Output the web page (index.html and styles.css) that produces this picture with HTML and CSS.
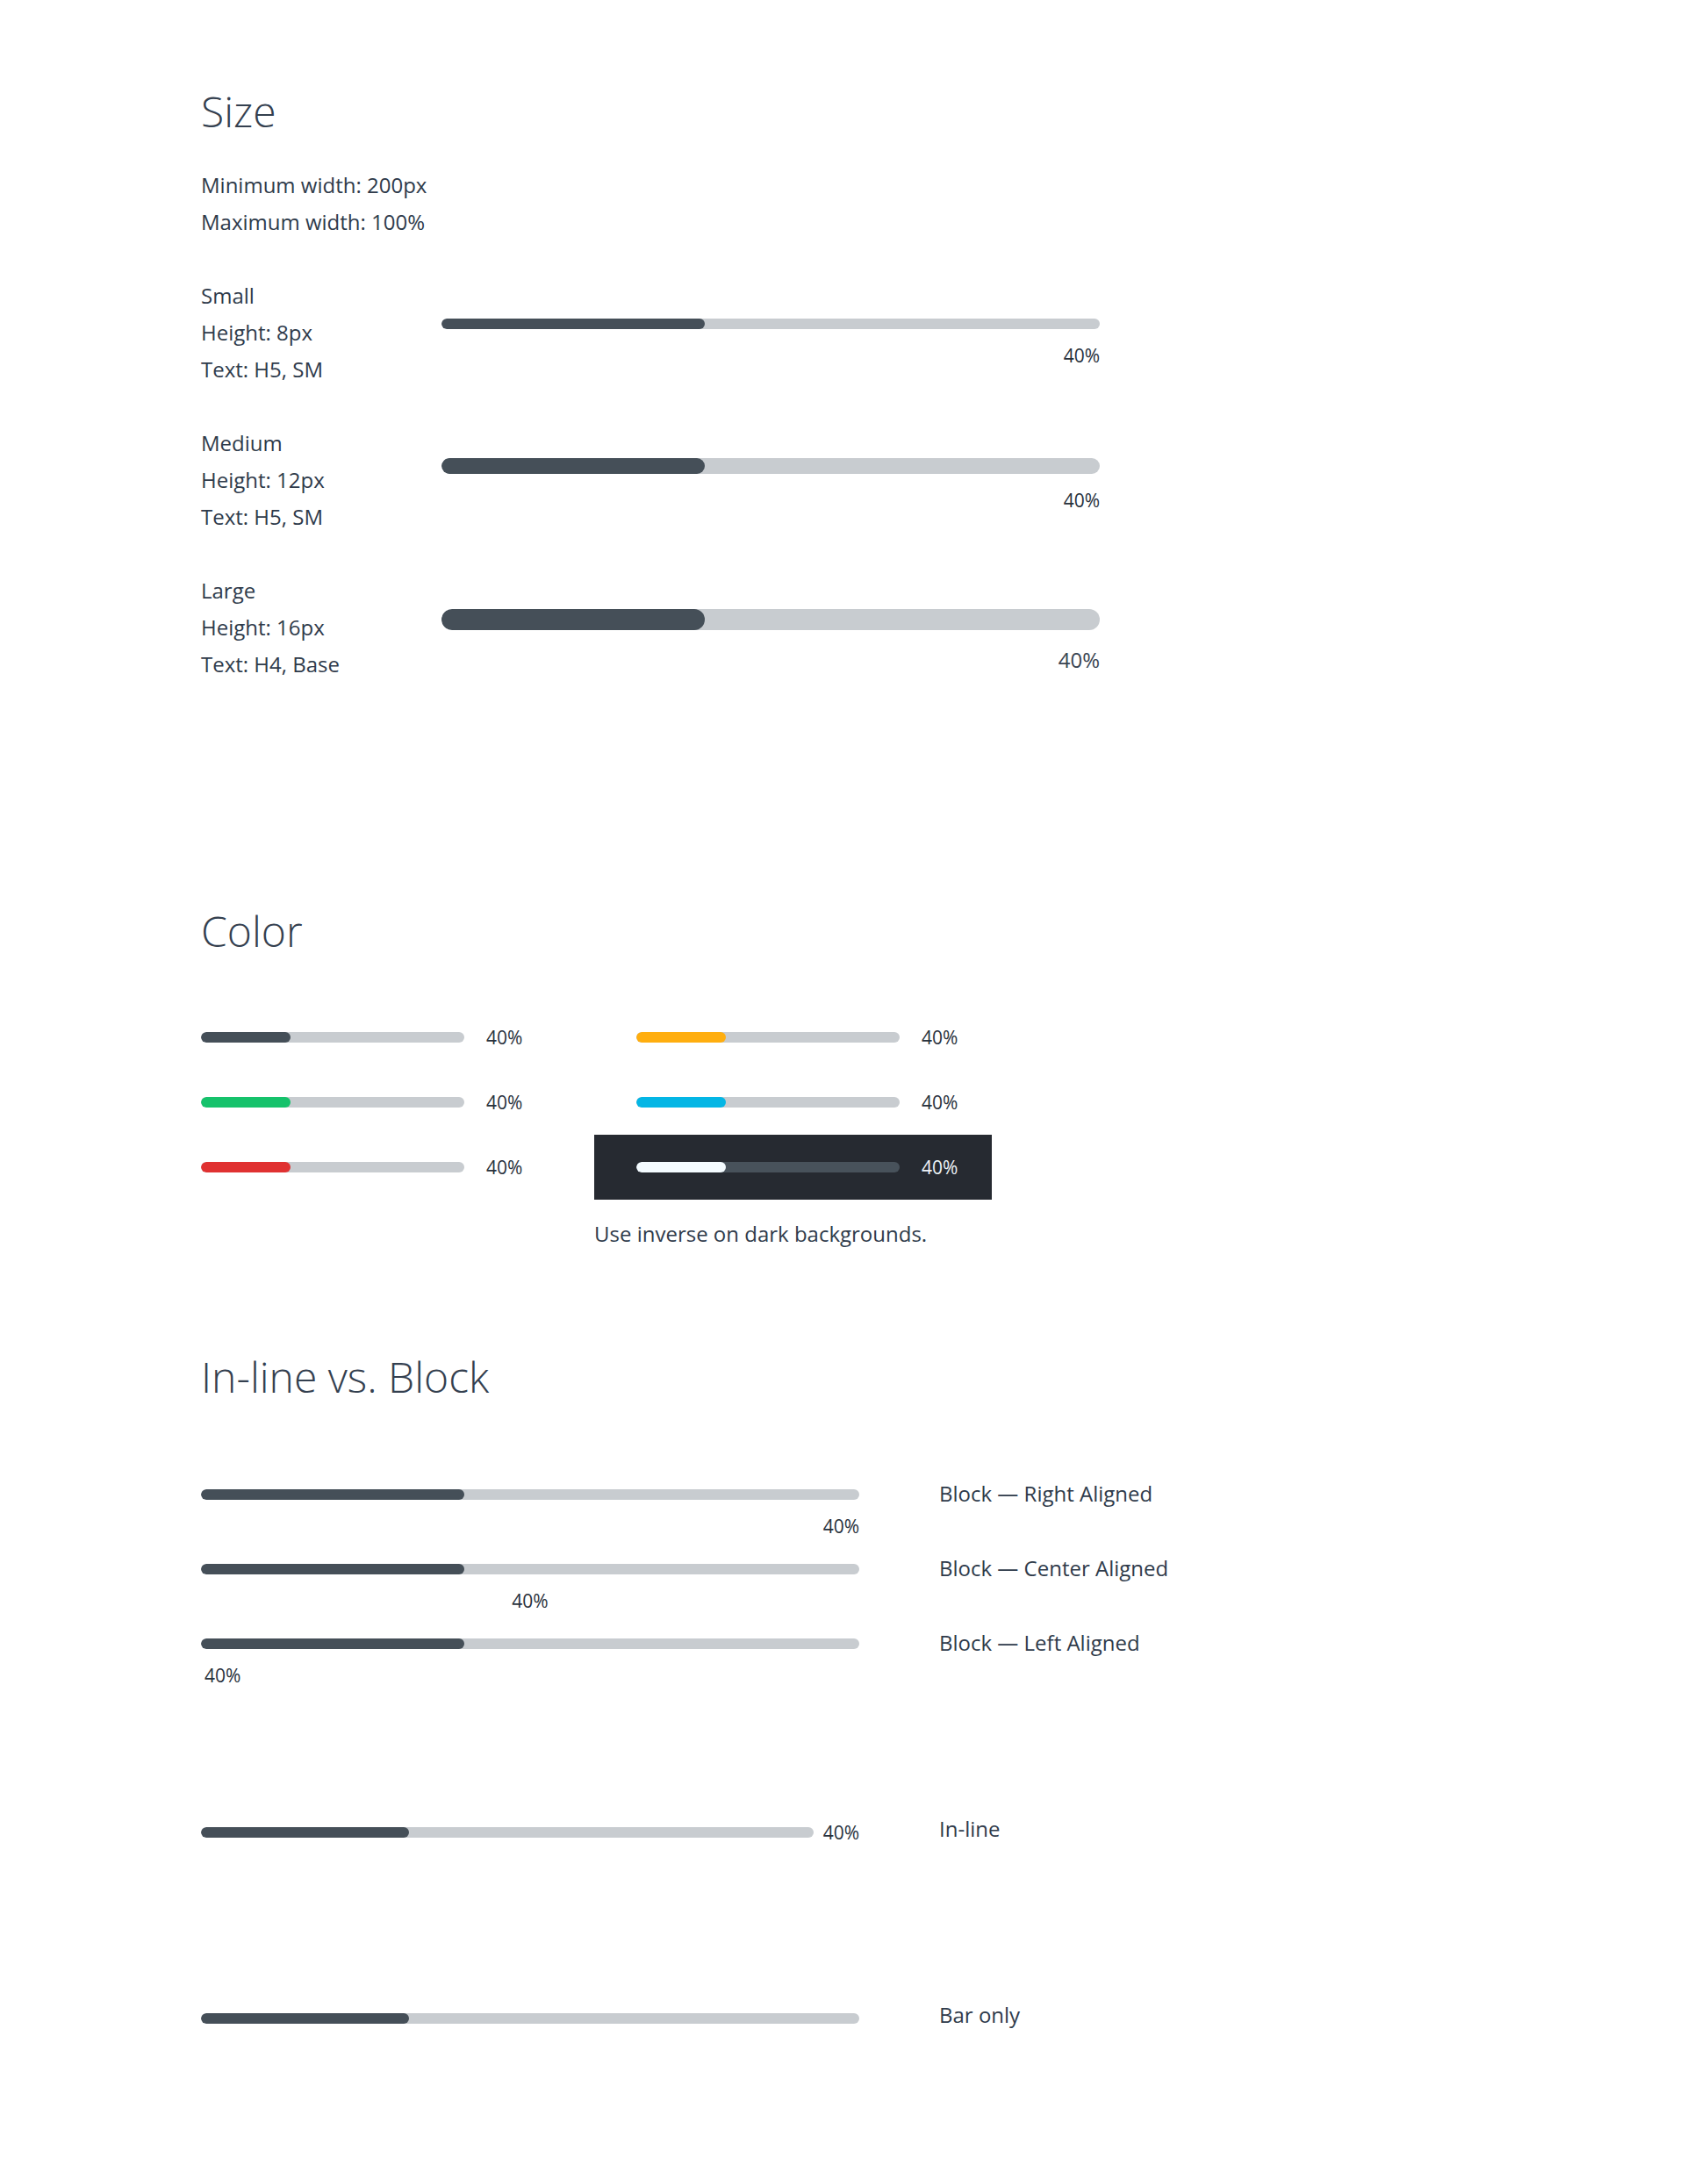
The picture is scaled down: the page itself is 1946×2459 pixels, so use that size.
FILE: index.html
```html
<!DOCTYPE html>
<html lang="en">
<head>
    <meta charset="UTF-8">
    <meta name="viewport" content="width=device-width, initial-scale=1.0">
    <title>Progress Bar</title>
    <link rel="stylesheet" href="styles.css">
</head>
<body>
    <div class="page">

        <section class="section">
            <h2 class="heading">Size</h2>
            <p class="note">Minimum width: 200px<br>Maximum width: 100%</p>

            <div class="size-row">
                <div class="size-label">Small<br>Height: 8px<br>Text: H5, SM</div>
                <div class="size-demo size-demo-sm">
                    <div class="bar bar-sm"><div class="fill" style="width:40%"></div></div>
                    <div class="value value-right">40%</div>
                </div>
            </div>

            <div class="size-row">
                <div class="size-label">Medium<br>Height: 12px<br>Text: H5, SM</div>
                <div class="size-demo size-demo-md">
                    <div class="bar bar-md"><div class="fill" style="width:40%"></div></div>
                    <div class="value value-right">40%</div>
                </div>
            </div>

            <div class="size-row">
                <div class="size-label">Large<br>Height: 16px<br>Text: H4, Base</div>
                <div class="size-demo size-demo-lg">
                    <div class="bar bar-lg"><div class="fill" style="width:40%"></div></div>
                    <div class="value value-right value-lg">40%</div>
                </div>
            </div>
        </section>

        <section class="section section-color">
            <h2 class="heading">Color</h2>
            <div class="color-grid">
                <div class="color-cell">
                    <div class="bar bar-sm bar-short"><div class="fill" style="width:34%"></div></div>
                    <span class="value">40%</span>
                </div>
                <div class="color-cell color-cell-right">
                    <div class="bar bar-sm bar-short"><div class="fill fill-warning" style="width:34%"></div></div>
                    <span class="value">40%</span>
                </div>
                <div class="color-cell">
                    <div class="bar bar-sm bar-short"><div class="fill fill-success" style="width:34%"></div></div>
                    <span class="value">40%</span>
                </div>
                <div class="color-cell color-cell-right">
                    <div class="bar bar-sm bar-short"><div class="fill fill-info" style="width:34%"></div></div>
                    <span class="value">40%</span>
                </div>
                <div class="color-cell">
                    <div class="bar bar-sm bar-short"><div class="fill fill-danger" style="width:34%"></div></div>
                    <span class="value">40%</span>
                </div>
                <div class="color-cell color-cell-right inverse">
                    <div class="bar bar-sm bar-short bar-inverse"><div class="fill fill-inverse" style="width:34%"></div></div>
                    <span class="value value-inverse">40%</span>
                </div>
                <p class="inverse-note">Use inverse on dark backgrounds.</p>
            </div>
        </section>

        <section class="section section-layout">
            <h2 class="heading">In-line vs. Block</h2>

            <div class="layout-row">
                <div class="block-demo">
                    <div class="bar bar-sm"><div class="fill" style="width:40%"></div></div>
                    <div class="value value-right">40%</div>
                </div>
                <div class="layout-label">Block — Right Aligned</div>
            </div>

            <div class="layout-row">
                <div class="block-demo">
                    <div class="bar bar-sm"><div class="fill" style="width:40%"></div></div>
                    <div class="value value-center">40%</div>
                </div>
                <div class="layout-label">Block — Center Aligned</div>
            </div>

            <div class="layout-row">
                <div class="block-demo">
                    <div class="bar bar-sm"><div class="fill" style="width:40%"></div></div>
                    <div class="value value-left">40%</div>
                </div>
                <div class="layout-label">Block — Left Aligned</div>
            </div>

            <div class="layout-row layout-row-inline">
                <div class="inline-demo">
                    <div class="bar bar-sm bar-grow"><div class="fill" style="width:34%"></div></div>
                    <span class="value">40%</span>
                </div>
                <div class="layout-label">In-line</div>
            </div>

            <div class="layout-row layout-row-baronly">
                <div class="baronly-demo">
                    <div class="bar bar-sm"><div class="fill" style="width:31.6%"></div></div>
                </div>
                <div class="layout-label">Bar only</div>
            </div>
        </section>

    </div>
</body>
</html>
```

FILE: styles.css
```css
body {
    margin: 0;
    background-color: #fff;
    font-family: "Open Sans", "Noto Sans", sans-serif;
    color: #2f3b4b;
}
.page {
    padding: 97px 0 140px 229px;
}
.heading {
    margin: 0;
    font-size: 48px;
    line-height: 60px;
    font-weight: 300;
    color: #34404f;
}
.note {
    margin: 33px 0 0;
    font-size: 24px;
    line-height: 42px;
}

/* size */
.size-row {
    display: flex;
    margin-top: 42px;
}
.size-label {
    width: 274px;
    font-size: 24px;
    line-height: 42px;
}
.size-demo {
    width: 750px;
}
.size-demo-sm {
    padding-top: 47px;
}
.size-demo-md {
    padding-top: 38px;
}
.size-demo-lg {
    padding-top: 42px;
}

/* bar */
.bar {
    background-color: #c8ccd0;
    border-radius: 12px;
    overflow: hidden;
}
.bar-sm {
    height: 12px;
}
.bar-md {
    height: 18px;
}
.bar-lg {
    height: 24px;
}
.bar-short {
    width: 300px;
    flex: none;
}
.bar-grow {
    flex: 1;
}
.fill {
    height: 100%;
    background-color: #454f58;
    border-radius: 12px;
}
.fill-success {
    background-color: #15c26b;
}
.fill-danger {
    background-color: #e03131;
}
.fill-warning {
    background-color: #ffae0f;
}
.fill-info {
    background-color: #04b6e5;
}
.fill-inverse {
    background-color: #f4fbff;
}
.bar-inverse {
    background-color: #48525b;
}

.value {
    font-size: 21px;
    line-height: 30px;
    color: #28313c;
}
.size-demo .value,
.block-demo .value {
    margin-top: 15px;
}
.size-demo .value-lg {
    margin-top: 19px;
    font-size: 24px;
    color: #3a4552;
}
.value-right {
    text-align: right;
}
.value-center {
    text-align: center;
}
.value-left {
    text-align: left;
    padding-left: 4px;
}
.value-inverse {
    color: #eef3f7;
}

/* color */
.section-color {
    margin-top: 253px;
}
.color-grid {
    display: grid;
    grid-template-columns: 448px 453px;
    grid-template-rows: repeat(3, 74px) auto;
    margin-top: 54px;
}
.color-cell {
    display: flex;
    align-items: center;
    gap: 25px;
}
.color-cell-right {
    padding-left: 48px;
}
.inverse {
    background-color: #262a31;
}
.inverse-note {
    grid-column: 2;
    margin: 18px 0 0;
    font-size: 24px;
    line-height: 42px;
}

/* in-line vs block */
.section-layout {
    margin-top: 112px;
}
.layout-row {
    display: flex;
    align-items: flex-start;
    margin-top: 12px;
}
.layout-row:first-of-type {
    margin-top: 82px;
}
.block-demo {
    width: 750px;
    padding-top: 16px;
}
.layout-label {
    margin-left: 91px;
    font-size: 24px;
    line-height: 42px;
}
.layout-row-inline {
    margin-top: 139px;
}
.inline-demo {
    width: 750px;
    margin-top: 10px;
    display: flex;
    align-items: center;
    gap: 11px;
}
.layout-row-baronly {
    margin-top: 170px;
}
.baronly-demo {
    width: 750px;
    padding-top: 19px;
}
```
